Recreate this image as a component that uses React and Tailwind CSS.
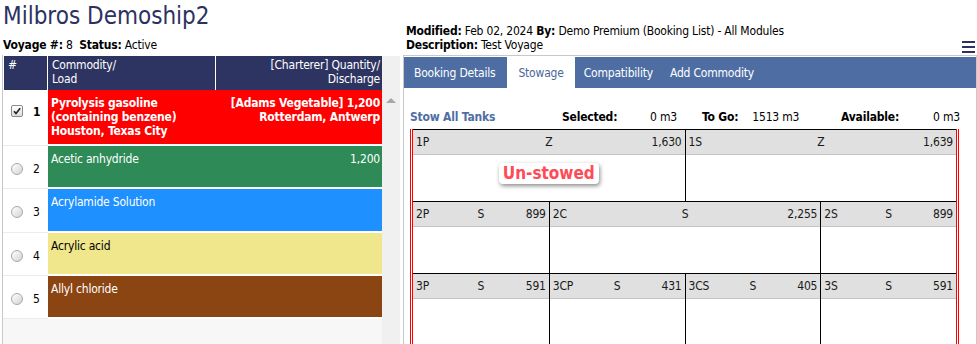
import React from "react";

const rows = [
  {
    n: 1,
    checked: true,
    bg: "bg-[#ff0000]",
    text: "text-white font-bold",
    h: "h-[54px]",
    left: ["Pyrolysis gasoline", "(containing benzene)", "Houston, Texas City"],
    right: ["[Adams Vegetable] 1,200", "Rotterdam, Antwerp"],
  },
  { n: 2, bg: "bg-[#2e8b57]", text: "text-white", h: "h-[41px]", left: ["Acetic anhydride"], right: ["1,200"] },
  { n: 3, bg: "bg-[#1e90ff]", text: "text-white", h: "h-[42px]", left: ["Acrylamide Solution"], right: [] },
  { n: 4, bg: "bg-[#f0e68c]", text: "text-black", h: "h-[41px]", left: ["Acrylic acid"], right: [] },
  { n: 5, bg: "bg-[#8b4513]", text: "text-white", h: "h-[41px]", left: ["Allyl chloride"], right: [] },
];

const tankRows = [
  [
    { name: "1P", type: "Z", vol: "1,630", span: "col-span-2", label: true },
    { name: "1S", type: "Z", vol: "1,639", span: "col-span-2" },
  ],
  [
    { name: "2P", type: "S", vol: "899", span: "col-span-1" },
    { name: "2C", type: "S", vol: "2,255", span: "col-span-2" },
    { name: "2S", type: "S", vol: "899", span: "col-span-1" },
  ],
  [
    { name: "3P", type: "S", vol: "591", span: "col-span-1" },
    { name: "3CP", type: "S", vol: "431", span: "col-span-1" },
    { name: "3CS", type: "S", vol: "405", span: "col-span-1" },
    { name: "3S", type: "S", vol: "591", span: "col-span-1" },
  ],
];

const Checkbox = () => (
  <div className="w-[12px] h-[12px] rounded-[2px] border border-[#8a8a8a] bg-gradient-to-b from-white to-[#dcdcdc] flex items-center justify-center">
    <svg width="10" height="10" viewBox="0 0 10 10" fill="none" stroke="#222" strokeWidth="1.6">
      <path d="M2 5.2l2 2.2L8.2 2.2" />
    </svg>
  </div>
);

const Radio = () => (
  <div className="w-[12px] h-[12px] rounded-full border border-[#a8a8a8] bg-gradient-to-br from-white to-[#d4d4d4]"></div>
);

export default function App() {
  return (
    <div className="w-[977px] h-[344px] overflow-hidden bg-white font-['DejaVu_Sans_Condensed','DejaVu_Sans',sans-serif] text-[12px] leading-[14px] tracking-[-0.2px] text-black">
      {/* top info */}
      <div className="flex h-[55px]">
        <div className="w-[403px] pl-[3px]">
          <div className="text-[24px] leading-[32px] tracking-normal text-[#2b3261]">Milbros Demoship2</div>
          <div className="mt-[6px]">
            <span className="font-bold">Voyage #:</span> 8&nbsp;&nbsp;<span className="font-bold">Status:</span> Active
          </div>
        </div>
        <div className="flex-1 flex items-end justify-between pl-[3px] pr-[2px]">
          <div className="pb-[3px]">
            <div>
              <span className="font-bold">Modified:</span> Feb 02, 2024 <span className="font-bold">By:</span> Demo Premium (Booking List) - All Modules
            </div>
            <div>
              <span className="font-bold">Description:</span> Test Voyage
            </div>
          </div>
          <div className="flex flex-col gap-[3px] pb-[2px]">
            <div className="w-[13px] h-[2px] bg-[#2b3261]"></div>
            <div className="w-[13px] h-[2px] bg-[#2b3261]"></div>
            <div className="w-[13px] h-[2px] bg-[#2b3261]"></div>
          </div>
        </div>
      </div>

      <div className="flex h-[289px]">
        {/* booking list */}
        <div className="ml-[2px] w-[398px] pt-[1px] border-l border-[#c8c8c8] flex">
          <div className="w-[379px] bg-[#f7f7f7]">
            <div className="flex gap-[1px] bg-white pl-[1px] h-[34px] text-white">
              <div className="w-[43px] bg-[#2d3461] pl-[4px] pt-[2px]">#</div>
              <div className="w-[167px] bg-[#2d3461] pl-[4px] pt-[2px]">
                Commodity/
                <br />
                Load
              </div>
              <div className="w-[166px] bg-[#2d3461] pr-[2px] pt-[2px] text-right">
                [Charterer] Quantity/
                <br />
                Discharge
              </div>
            </div>
            {rows.map((r) => (
              <div key={r.n} className="flex">
                <div
                  className={`w-[45px] bg-white border-b border-[#ececec] flex pl-[8px] gap-[10px] ${
                    r.checked ? "items-start pt-[15px]" : "items-center pt-[3px]"
                  }`}
                >
                  {r.checked ? <Checkbox /> : <Radio />}
                  <span className={r.checked ? "font-bold" : ""}>{r.n}</span>
                </div>
                <div className="flex-1 bg-white pb-[2px]">
                  <div className={`${r.h} ${r.bg} ${r.text} flex justify-between pl-[3px] pr-[2px] pt-[6px]`}>
                    <div>
                      {r.left.map((t) => (
                        <div key={t}>{t}</div>
                      ))}
                    </div>
                    <div className="text-right">
                      {r.right.map((t) => (
                        <div key={t}>{t}</div>
                      ))}
                    </div>
                  </div>
                </div>
              </div>
            ))}
          </div>
          <div className="w-[18px] bg-[#f0f0f0] flex justify-center pt-[42px]">
            <div className="w-0 h-0 border-x-[5px] border-x-transparent border-b-[5px] border-b-[#a8a8a8]"></div>
          </div>
        </div>

        {/* stowage panel */}
        <div className="ml-[3px] w-[574px] border-x border-t border-[#c8c8c8] pt-[1px]">
          <div className="h-[31px] bg-[#4e6ea3] flex text-white">
            <div className="pl-[10px] pr-[12px] flex items-center">Booking Details</div>
            <div className="px-[11px] flex items-center bg-white text-[#4b6797]">Stowage</div>
            <div className="pl-[9px] pr-[8px] flex items-center">Compatibility</div>
            <div className="px-[9px] flex items-center">Add Commodity</div>
          </div>
          <div className="pt-[22px] pl-[6px]">
            <div className="flex items-center pr-[16px]">
              <div className="w-[152px] font-bold text-[#4e6ea3]">Stow All Tanks</div>
              <div className="w-[115px] flex justify-between">
                <span className="font-bold">Selected:</span>
                <span>0 m3</span>
              </div>
              <div className="ml-[25px] flex gap-[14px]">
                <span className="font-bold">To Go:</span>
                <span>1513 m3</span>
              </div>
              <div className="ml-auto w-[119px] flex justify-between">
                <span className="font-bold">Available:</span>
                <span>0 m3</span>
              </div>
            </div>
            <div className="mt-[5px] w-[549px] border-x-[3px] border-double border-[#ff0000]">
              {tankRows.map((row, i) => (
                <div key={i} className="grid grid-cols-4 border-t border-black">
                  {row.map((c, j) => (
                    <div key={c.name} className={`${c.span} ${j > 0 ? "border-l border-black" : ""}`}>
                      <div className="h-[25px] bg-[#e0e0e0] border-b border-[#c4c4c4] flex items-center px-[3px] text-[#1a1a1a]">
                        <span className="flex-1">{c.name}</span>
                        <span>{c.type}</span>
                        <span className="flex-1 text-right">{c.vol}</span>
                      </div>
                      <div className="h-[46px] bg-white flex justify-center pt-[8px]">
                        {c.label && (
                          <span className="h-[21px] px-[4px] rounded-[4px] bg-white shadow-[1px_2px_4px_rgba(0,0,0,0.45)] text-[#ff4b57] font-bold text-[17px] leading-[21px] tracking-normal">
                            Un-stowed
                          </span>
                        )}
                      </div>
                    </div>
                  ))}
                </div>
              ))}
            </div>
          </div>
        </div>
      </div>
    </div>
  );
}
